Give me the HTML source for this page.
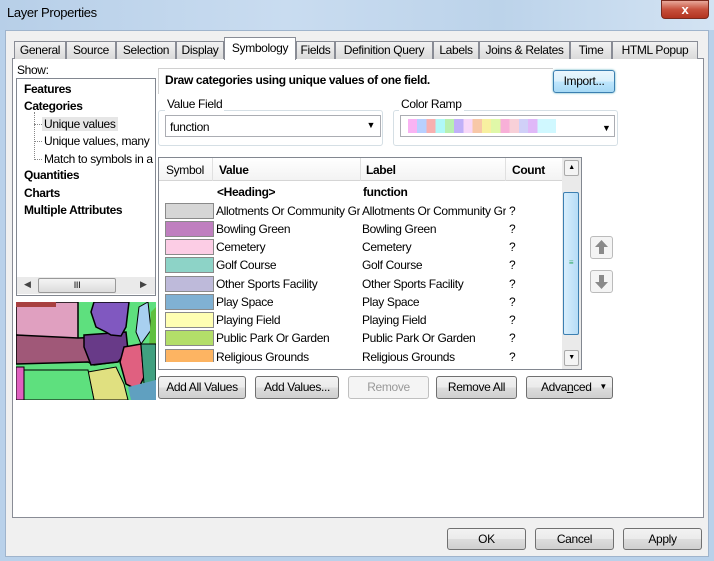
<!DOCTYPE html>
<html><head><style>
*{box-sizing:border-box;margin:0;padding:0}
body{width:714px;height:561px;position:relative;overflow:hidden;font-family:"Liberation Sans",sans-serif;font-size:12px;letter-spacing:-0.35px;color:#000;background:#b9d1ea}
.a{position:absolute}
.btn{position:absolute;border:1px solid #707070;border-radius:3px;background:linear-gradient(#f2f2f2,#ebebeb 50%,#dddddd 51%,#cfcfcf);text-align:center;font-size:12px;line-height:20px}
.tab{position:absolute;top:41px;height:18px;border:1px solid #898c95;border-bottom:none;background:linear-gradient(#f2f2f2,#dadada);text-align:center;line-height:16px;font-size:12px}
.b{font-weight:bold}
.sw{position:absolute;left:165px;width:49px;height:16px;border:1px solid #8a8a8a}
.row{position:absolute;font-size:12px;white-space:nowrap}
</style></head><body>
<div class="a" style="left:0;top:0;width:714px;height:30px;background:linear-gradient(90deg,#b7cfe8,#c9dcf0 40%,#bcd3ea 70%,#d3e3f3)"></div>
<div class="a" style="left:7px;top:5px;font-size:13px">Layer Properties</div>
<div class="a" style="left:661px;top:0;width:48px;height:19px;border-radius:0 0 4px 4px;background:linear-gradient(#e8a89a,#c7503c 50%,#b23420);border:1px solid #7a2a1e;color:#fff;text-align:center;font-weight:bold;font-size:13px;line-height:17px">x</div>
<div class="a" style="left:5px;top:30px;width:704px;height:527px;background:#f0f0f0;border:1px solid #9fb4cc"></div>
<div class="a" style="left:12px;top:58px;width:692px;height:460px;background:#fff;border:1px solid #898c95"></div>
<div class="tab" style="left:14px;width:52px">General</div>
<div class="tab" style="left:66px;width:50px">Source</div>
<div class="tab" style="left:116px;width:60px">Selection</div>
<div class="tab" style="left:176px;width:48px">Display</div>
<div class="tab" style="left:224px;top:37px;height:23px;width:72px;background:#fff;line-height:20px">Symbology</div>
<div class="tab" style="left:296px;width:39px">Fields</div>
<div class="tab" style="left:335px;width:98px">Definition Query</div>
<div class="tab" style="left:433px;width:46px">Labels</div>
<div class="tab" style="left:479px;width:91px">Joins &amp; Relates</div>
<div class="tab" style="left:570px;width:42px">Time</div>
<div class="tab" style="left:612px;width:86px">HTML Popup</div>

<div class="a" style="left:17px;top:63px">Show:</div>
<div class="a" style="left:16px;top:78px;width:140px;height:218px;border:1px solid #828790;background:#fff"></div>
<div class="a b" style="left:24px;top:82px">Features</div>
<div class="a b" style="left:24px;top:99px">Categories</div>
<div class="a" style="left:34px;top:112px;height:48px;border-left:1px dotted #888"></div>
<div class="a" style="left:34px;top:124px;width:8px;border-top:1px dotted #888"></div>
<div class="a" style="left:34px;top:141px;width:8px;border-top:1px dotted #888"></div>
<div class="a" style="left:34px;top:159px;width:8px;border-top:1px dotted #888"></div>
<div class="a" style="left:42px;top:117px;background:#e6e6e6;padding:0 2px">Unique values</div>
<div class="a" style="left:44px;top:134px;white-space:nowrap;width:110px;overflow:hidden">Unique values, many</div>
<div class="a" style="left:44px;top:152px;white-space:nowrap;width:110px;overflow:hidden">Match to symbols in a</div>
<div class="a b" style="left:24px;top:168px">Quantities</div>
<div class="a b" style="left:24px;top:186px">Charts</div>
<div class="a b" style="left:24px;top:203px">Multiple Attributes</div>
<div class="a" style="left:17px;top:277px;width:138px;height:17px;background:#eaeaea"></div>
<div class="a" style="left:24px;top:279px;font-size:9px;color:#444">◀</div>
<div class="a" style="left:140px;top:279px;font-size:9px;color:#444">▶</div>
<div class="a" style="left:38px;top:278px;width:78px;height:15px;border:1px solid #999;border-radius:2px;background:linear-gradient(#f4f4f4,#dcdcdc);text-align:center;font-size:9px;line-height:13px">III</div>
<svg class="a" style="left:16px;top:302px" width="140" height="98" viewBox="0 0 140 98">
<rect width="140" height="98" fill="#5ee07e"/>
<polygon points="0,0 62,0 62,36 55,38 0,33" fill="#e0a0c0" stroke="#000" stroke-width="1.5"/>
<polygon points="0,0 40,0 40,5 0,5" fill="#a84040"/>
<polygon points="95,0 125,0 115,30 118,42 100,45 95,35 100,20" fill="#5ee07e"/>
<polygon points="62,36 90,35 100,45 108,55 100,60 78,63 72,60 0,62 0,33" fill="#a05878" stroke="#000" stroke-width="1.5"/>
<polygon points="68,33 110,30 112,48 102,60 75,63 68,45" fill="#683a88" stroke="#000" stroke-width="1.5"/>
<polygon points="78,0 113,0 110,25 105,34 95,33 90,30 80,25 75,10" fill="#8058c0" stroke="#000" stroke-width="1.5"/>
<polygon points="123,5 132,0 135,28 125,42 120,30" fill="#a8d0f0" stroke="#000" stroke-width="1"/>
<polygon points="135,10 140,5 140,60 133,45" fill="#60c040"/>
<polygon points="108,45 125,42 128,75 122,88 110,82 104,60" fill="#e06080" stroke="#000" stroke-width="1.5"/>
<polygon points="125,42 140,42 140,80 128,82" fill="#40a080" stroke="#000" stroke-width="1"/>
<polygon points="72,70 100,65 108,82 112,98 78,98" fill="#e0e080" stroke="#000" stroke-width="1"/>
<polygon points="112,85 140,78 140,98 115,98" fill="#60a0c0"/>
<polygon points="0,65 8,65 8,98 0,98" fill="#e060c0" stroke="#000" stroke-width="1"/>
<polygon points="8,68 72,68 78,98 8,98" fill="#5ee07e" stroke="#000" stroke-width="1"/>
</svg>

<div class="a" style="left:158px;top:68px;width:395px;height:26px;border-top:1px solid #d0d0d0;border-left:1px solid #d0d0d0"></div>
<div class="a b" style="left:165px;top:73px">Draw categories using unique values of one field.</div>
<div class="btn" style="left:553px;top:70px;width:62px;height:23px;border-color:#3c7fb1;background:linear-gradient(#eaf6fd,#d9f0fc 50%,#bee6fd 51%,#a7d9f5);box-shadow:0 0 2px #5ab">Import...</div>

<div class="a" style="left:158px;top:110px;width:225px;height:36px;border:1px solid #d5dfe5;border-radius:3px"></div>
<div class="a" style="left:165px;top:97px;background:#fff;padding:0 2px">Value Field</div>
<div class="a" style="left:165px;top:115px;width:216px;height:22px;border:1px solid #abadb3;padding:4px 4px">function<span style="position:absolute;right:5px;top:4px;font-size:9px">▼</span></div>
<div class="a" style="left:393px;top:110px;width:225px;height:36px;border:1px solid #d5dfe5;border-radius:3px"></div>
<div class="a" style="left:399px;top:97px;background:#fff;padding:0 2px">Color Ramp</div>
<div class="a" style="left:400px;top:115px;width:215px;height:22px;border:1px solid #abadb3"></div>
<div class="a" style="left:408px;top:119px;width:185px;height:14px;background:linear-gradient(90deg,#f9b3f3 0 5%,#b8d0ff 5% 10%,#f8b0b0 10% 15%,#b0f8f8 15% 20%,#b8f0b0 20% 25%,#c0b0f8 25% 30%,#f8d8f8 30% 35%,#f8c8a8 35% 40%,#f8f0a0 40% 45%,#e0f8a8 45% 50%,#f8b0d8 50% 55%,#f8d0d8 55% 60%,#d0d0f8 60% 65%,#e0b8f8 65% 70%,#d0f8ff 70% 80%,#fff 80%)"></div>
<div class="a" style="left:602px;top:123px;font-size:9px">▼</div>

<div class="a" style="left:158px;top:157px;width:424px;height:213px;border:1px solid #828790;background:#fff"></div>
<div class="a" style="left:159px;top:158px;width:403px;height:23px;background:linear-gradient(#fff,#f3f3f3);border-bottom:1px solid #d5d5d5"></div>
<div class="a" style="left:212px;top:158px;height:23px;border-left:1px solid #e0e0e0"></div>
<div class="a" style="left:360px;top:158px;height:23px;border-left:1px solid #e0e0e0"></div>
<div class="a" style="left:505px;top:158px;height:23px;border-left:1px solid #e0e0e0"></div>
<div class="a" style="left:166px;top:163px">Symbol</div>
<div class="a b" style="left:219px;top:163px">Value</div>
<div class="a b" style="left:366px;top:163px">Label</div>
<div class="a b" style="left:512px;top:163px">Count</div>
<div class="a" style="left:562px;top:158px;width:19px;height:211px;background:#eaeaea"></div>
<div class="a" style="left:564px;top:160px;width:15px;height:16px;border:1px solid #aaa;border-radius:2px;background:#f4f4f4;font-size:7px;text-align:center;line-height:14px">▲</div>
<div class="a" style="left:564px;top:350px;width:15px;height:16px;border:1px solid #aaa;border-radius:2px;background:#f4f4f4;font-size:7px;text-align:center;line-height:14px">▼</div>
<div class="a" style="left:563px;top:192px;width:16px;height:143px;border:1px solid #3c7fb1;border-radius:2px;background:linear-gradient(90deg,#d8eefc,#b6dcf6);text-align:center;line-height:140px;font-size:8px;color:#3a6">≡</div>

<div class="row b" style="left:217px;top:185px">&lt;Heading&gt;</div>
<div class="row b" style="left:363px;top:185px">function</div>
<div class="sw" style="top:203px;background:#d6d6d6"></div><div class="sw" style="top:221px;background:#bf7fbf"></div>
<div class="sw" style="top:239px;background:#fccde5"></div><div class="sw" style="top:257px;background:#8dd3c7"></div>
<div class="sw" style="top:276px;background:#bebada"></div><div class="sw" style="top:294px;background:#80b1d3"></div>
<div class="sw" style="top:312px;background:#ffffb3"></div><div class="sw" style="top:330px;background:#b3de69"></div>
<div class="sw" style="top:349px;background:#fdb462;height:13px;border-bottom:none"></div>
<div class="row" style="left:216px;top:204px;width:144px;overflow:hidden">Allotments Or Community Gro</div>
<div class="row" style="left:216px;top:222px">Bowling Green</div>
<div class="row" style="left:216px;top:240px">Cemetery</div>
<div class="row" style="left:216px;top:258px">Golf Course</div>
<div class="row" style="left:216px;top:277px">Other Sports Facility</div>
<div class="row" style="left:216px;top:295px">Play Space</div>
<div class="row" style="left:216px;top:313px">Playing Field</div>
<div class="row" style="left:216px;top:331px">Public Park Or Garden</div>
<div class="row" style="left:216px;top:350px">Religious Grounds</div>
<div class="row" style="left:362px;top:204px;width:144px;overflow:hidden">Allotments Or Community Gro</div>
<div class="row" style="left:362px;top:222px">Bowling Green</div>
<div class="row" style="left:362px;top:240px">Cemetery</div>
<div class="row" style="left:362px;top:258px">Golf Course</div>
<div class="row" style="left:362px;top:277px">Other Sports Facility</div>
<div class="row" style="left:362px;top:295px">Play Space</div>
<div class="row" style="left:362px;top:313px">Playing Field</div>
<div class="row" style="left:362px;top:331px">Public Park Or Garden</div>
<div class="row" style="left:362px;top:350px">Religious Grounds</div>
<div class="row" style="left:509px;top:204px">?</div>
<div class="row" style="left:509px;top:222px">?</div>
<div class="row" style="left:509px;top:240px">?</div>
<div class="row" style="left:509px;top:258px">?</div>
<div class="row" style="left:509px;top:277px">?</div>
<div class="row" style="left:509px;top:295px">?</div>
<div class="row" style="left:509px;top:313px">?</div>
<div class="row" style="left:509px;top:331px">?</div>
<div class="row" style="left:509px;top:350px">?</div>

<div class="a" style="left:590px;top:236px;width:23px;height:23px;border:1px solid #bbb;border-radius:3px;background:#f4f4f4"><svg width="21" height="21"><path d="M10.5 3 L4 10 H8 V17 H13 V10 H17 Z" fill="#8a8a8a"/></svg></div>
<div class="a" style="left:590px;top:270px;width:23px;height:23px;border:1px solid #bbb;border-radius:3px;background:#f4f4f4"><svg width="21" height="21"><path d="M10.5 18 L4 11 H8 V4 H13 V11 H17 Z" fill="#8a8a8a"/></svg></div>

<div class="btn" style="left:158px;top:376px;width:88px;height:23px">Add All Values</div>
<div class="btn" style="left:255px;top:376px;width:84px;height:23px">Add Values...</div>
<div class="btn" style="left:348px;top:376px;width:81px;height:23px;color:#999;border-color:#c0c0c0;background:#f4f4f4">Remove</div>
<div class="btn" style="left:436px;top:376px;width:81px;height:23px">Remove All</div>
<div class="btn" style="left:526px;top:376px;width:87px;height:23px;text-align:left;padding-left:14px">Adva<u>n</u>ced<span style="position:absolute;right:5px;font-size:8px">▼</span></div>

<div class="btn" style="left:447px;top:528px;width:79px;height:22px">OK</div>
<div class="btn" style="left:535px;top:528px;width:79px;height:22px">Cancel</div>
<div class="btn" style="left:623px;top:528px;width:79px;height:22px">Apply</div>
</body></html>
